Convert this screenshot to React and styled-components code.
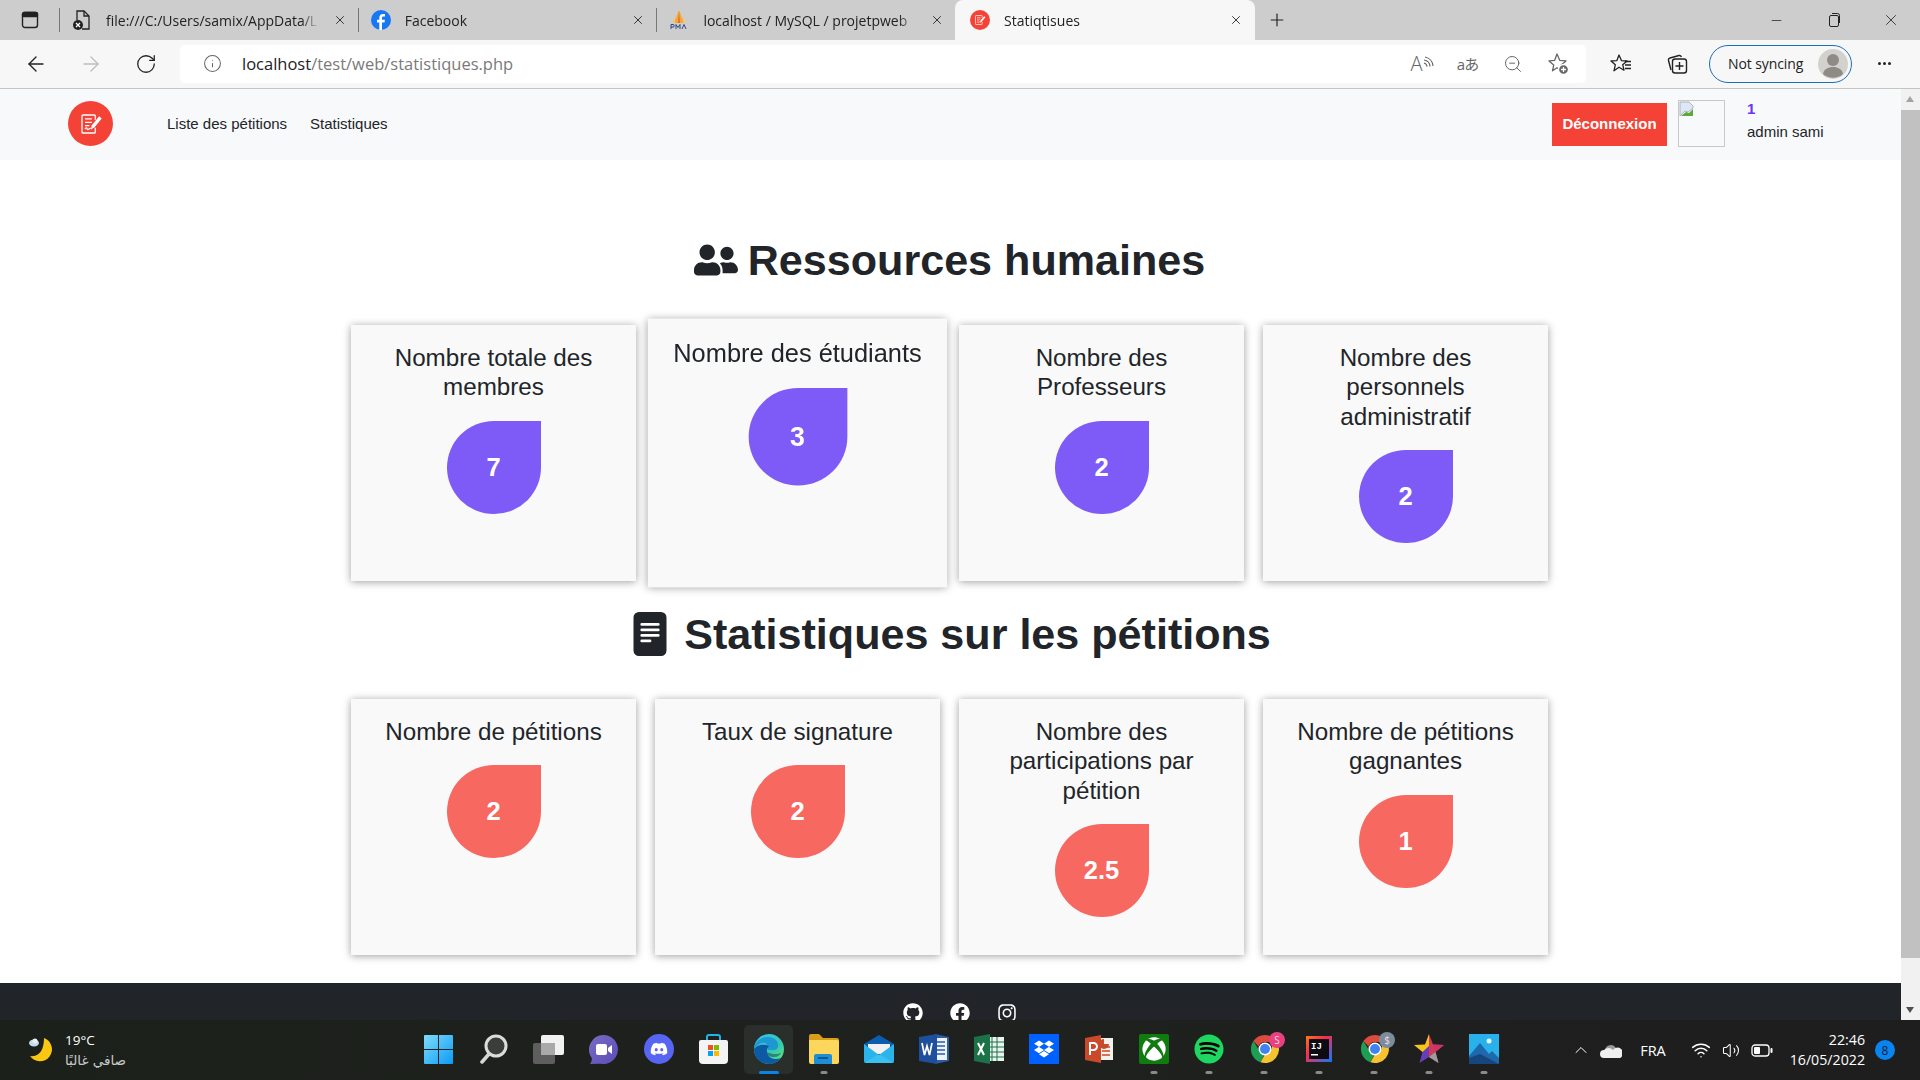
import React from 'react';
import styled, { createGlobalStyle } from 'styled-components';
import { FaUserFriends, FaGithub, FaFacebook, FaInstagram, FaDiscord, FaSpotify, FaXbox, FaDropbox } from 'react-icons/fa';
import { BsFileTextFill } from 'react-icons/bs';
import { ArrowLeft, ArrowRight, RotateCw, Info, ZoomOut, Minus, Plus, X, ChevronUp, Volume2, Wifi } from 'lucide-react';

const GlobalStyle = createGlobalStyle`
  html, body {
    margin: 0;
    padding: 0;
    height: 100%;
    overflow: hidden;
  }
  * { box-sizing: border-box; }
  #root { height: 100%; }
`;

const UI_FONT = `"Open Sans", "Noto Sans", sans-serif`;
const PAGE_FONT = `"Liberation Sans", Arial, sans-serif`;

const Screen = styled.div`
  height: 1080px;
  display: flex;
  flex-direction: column;
  background: #fff;
  font-family: ${PAGE_FONT};
`;

/* browser chrome */
const TabStrip = styled.div`
  height: 40px;
  flex: none;
  display: flex;
  align-items: stretch;
  background: #cdcdcd;
  font-family: ${UI_FONT};
  font-size: 14px;
  color: #222;
`;

const TabActions = styled.div`
  width: 60px;
  padding-left: 21px;
  display: flex;
  align-items: center;
  position: relative;
  &::after {
    content: '';
    position: absolute;
    right: 0;
    top: 8px;
    bottom: 8px;
    width: 1px;
    background: #777;
  }
`;

const Tab = styled.div`
  width: ${p => (p.$active ? '300px' : '298.7px')};
  margin-left: ${p => (p.$active ? '-1px' : '0')};
  padding: 0 12px 0 ${p => (p.$active ? '15px' : '12px')};
  display: flex;
  align-items: center;
  gap: 14px;
  position: relative;
  background: ${p => (p.$active ? '#f7f7f7' : 'transparent')};
  border-radius: ${p => (p.$active ? '8px 8px 0 0' : '0')};
  &::after {
    content: '';
    display: ${p => (p.$sep ? 'block' : 'none')};
    position: absolute;
    right: 0;
    top: 8px;
    bottom: 8px;
    width: 1px;
    background: #777;
  }
`;

const Favicon = styled.span`
  width: 20px;
  height: 20px;
  flex: none;
  display: flex;
  align-items: center;
  justify-content: center;
`;

const TabTitle = styled.span`
  flex: 1;
  white-space: nowrap;
  overflow: hidden;
  -webkit-mask-image: linear-gradient(to right, #000 92%, transparent 100%);
`;

const StripButton = styled.div`
  width: 44px;
  display: flex;
  align-items: center;
  justify-content: center;
`;

const WindowControls = styled.div`
  margin-left: auto;
  padding-right: 1px;
  display: flex;
`;

const WindowButton = styled.div`
  width: 57px;
  display: flex;
  align-items: center;
  justify-content: center;
`;

const Toolbar = styled.div`
  height: 49px;
  flex: none;
  padding: 5px 0 6px 8px;
  display: flex;
  align-items: center;
  background: #f7f7f7;
  border-bottom: 1px solid #c4c4c4;
  font-family: ${UI_FONT};
`;

const NavButton = styled.div`
  width: 55px;
  height: 38px;
  display: flex;
  align-items: center;
  justify-content: center;
  color: ${p => (p.$off ? '#bdbdbd' : '#222')};
`;

const AddressBar = styled.div`
  width: 1406px;
  height: 38px;
  margin: 0 7px;
  padding: 0 6px 0 23px;
  display: flex;
  align-items: center;
  background: #fff;
  border-radius: 5px;
  color: #666;
`;

const AddressText = styled.div`
  margin-left: 20px;
  flex: 1;
  font-size: 16.5px;
  color: #7a7a7a;
  b {
    font-weight: 400;
    color: #222;
  }
`;

const AddressAction = styled.div`
  width: 45px;
  height: 30px;
  display: flex;
  align-items: center;
  justify-content: center;
  position: relative;
  color: #666;
`;

const ReadAloud = styled.span`
  font-size: 20px;
  font-weight: 300;
  line-height: 1;
`;

const Translate = styled.span`
  font-family: "Open Sans", "Noto Sans CJK JP", sans-serif;
  font-size: 15px;
  letter-spacing: -1px;
`;

const ToolButton = styled.div`
  width: 56px;
  height: 38px;
  display: flex;
  align-items: center;
  justify-content: center;
  color: #222;
`;

const SyncPill = styled.div`
  width: 143px;
  height: 38px;
  margin-left: 4px;
  padding: 0 3px 0 18px;
  display: flex;
  align-items: center;
  justify-content: space-between;
  border: 1.5px solid #1b6fb5;
  border-radius: 19px;
  font-size: 14px;
  letter-spacing: -0.1px;
  color: #222;
`;

const MoreButton = styled.div`
  flex: 1;
  display: flex;
  align-items: center;
  justify-content: center;
  gap: 2px;
  padding-right: 3px;
`;

const MoreDot = styled.i`
  width: 3px;
  height: 3px;
  border-radius: 50%;
  background: #222;
`;

/* page */
const Viewport = styled.div`
  flex: 1;
  min-height: 0;
  display: flex;
  overflow: hidden;
`;

const Page = styled.div`
  flex: 1;
  min-width: 0;
  display: flex;
  flex-direction: column;
`;

const Navbar = styled.nav`
  height: 71px;
  flex: none;
  padding: 0 0 2px 68px;
  display: flex;
  align-items: center;
  background: #f8f9fa;
  font-size: 15px;
  color: #212529;
`;

const Logo = styled.div`
  width: 45px;
  height: 45px;
  border-radius: 50%;
  background: #f44336;
  display: flex;
  align-items: center;
  justify-content: center;
  margin-right: 54px;
`;

const NavLink = styled.a`
  margin-right: 23px;
  color: #212529;
`;

const Logout = styled.button`
  margin: 2px 0 0 auto;
  width: 115px;
  height: 43px;
  padding: 0 0 2px;
  border: none;
  background: #f44336;
  color: #fff;
  font: bold 15px ${PAGE_FONT};
`;

const Avatar = styled.div`
  width: 47px;
  height: 47px;
  margin-left: 11px;
  border: 1px solid #c8c8c8;
  display: flex;
  align-items: flex-start;
`;

const UserBlock = styled.div`
  width: 176px;
  padding: 0 0 8px 22px;
  line-height: 23px;
`;

const UserId = styled.div`
  color: #6d33ff;
  font-weight: 700;
`;

const Main = styled.main`
  flex: 1;
  padding: 76px 2px 28px 0;
  display: flex;
  flex-direction: column;
  align-items: center;
  gap: 29px;
`;

const Section = styled.section`
  display: flex;
  flex-direction: column;
  align-items: center;
  gap: 41px;
`;

const Heading = styled.h1`
  margin: 0;
  height: 48px;
  display: flex;
  align-items: center;
  gap: ${p => p.$gap}px;
  font-size: 43.1px;
  line-height: 48px;
  font-weight: 700;
  color: #212529;
`;

const CardRow = styled.div`
  display: grid;
  grid-template-columns: repeat(4, 285px);
  gap: 19px;
`;

const Card = styled.div`
  height: 256px;
  padding: 18px 22px 0;
  background: #f9f9f9;
  box-shadow: 0 1px 8px rgba(0, 0, 0, 0.38);
  text-align: center;
  transform: ${p => (p.$hovered ? 'scale(1.05)' : 'none')};
`;

const CardTitle = styled.h4`
  margin: 0 0 19px;
  font-size: 24.2px;
  line-height: 29.4px;
  font-weight: 400;
  color: #212529;
`;

const Drop = styled.div`
  width: 94px;
  height: 93px;
  margin: 0 auto;
  display: flex;
  align-items: center;
  justify-content: center;
  border-radius: 50% 0 50% 50%;
  background: ${p => p.$color};
  color: #fff;
  font-size: 25.5px;
  font-weight: 700;
`;

const Footer = styled.footer`
  height: 60px;
  flex: none;
  padding: 20px 0 0 19px;
  display: flex;
  justify-content: center;
  gap: 27px;
  background: #212529;
  color: #fff;
  font-size: 20px;
`;

const Scrollbar = styled.div`
  width: 19px;
  flex: none;
  padding-top: 21px;
  position: relative;
  background: #f1f1f1;
`;

const ScrollThumb = styled.div`
  height: 848px;
  background: #c1c1c1;
`;

const ScrollArrow = styled.i`
  position: absolute;
  left: 5px;
  ${p => (p.$down ? 'bottom: 7px;' : 'top: 7px;')}
  border-left: 4.5px solid transparent;
  border-right: 4.5px solid transparent;
  ${p => (p.$down ? 'border-top: 6px solid #505050;' : 'border-bottom: 6px solid #a3a3a3;')}
`;

/* windows taskbar */
const Taskbar = styled.div`
  height: 60px;
  flex: none;
  display: flex;
  align-items: stretch;
  background: linear-gradient(to right, #1c201b 0%, #1e211d 55%, #1e1e1e 85%);
  color: #fff;
  font-family: ${UI_FONT};
`;

const Weather = styled.div`
  width: 411px;
  flex: none;
  padding-left: 28px;
  display: flex;
  align-items: center;
  gap: 11px;
`;

const WeatherText = styled.div`
  font-size: 13.5px;
  line-height: 20px;
  em {
    display: block;
    font-style: normal;
    font-family: "DejaVu Sans", sans-serif;
    font-size: 13.5px;
    color: #c9c9c9;
  }
`;

const Dock = styled.div`
  display: flex;
  align-items: stretch;
`;

const DockItem = styled.div`
  width: 55.05px;
  height: 54px;
  margin-top: 5px;
  display: flex;
  align-items: center;
  justify-content: center;
  padding-bottom: 6px;
  position: relative;
  &::before {
    content: '';
    display: ${p => (p.$current ? 'block' : 'none')};
    position: absolute;
    left: 3px;
    right: 3px;
    top: 0;
    bottom: 5px;
    border-radius: 5px;
    background: #2b2f2b;
  }
  svg { position: relative; }
  &::after {
    content: '';
    display: ${p => (p.$state ? 'block' : 'none')};
    position: absolute;
    bottom: 5px;
    left: 50%;
    transform: translateX(-50%);
    width: ${p => (p.$state === 'active' ? '20px' : '7px')};
    height: 3px;
    border-radius: 2px;
    background: ${p => (p.$state === 'active' ? '#0a84e8' : '#8a8a8a')};
  }
`;

const Tray = styled.div`
  margin-left: auto;
  padding-right: 25px;
  display: flex;
  align-items: center;
`;

const TraySlot = styled.div`
  width: ${p => p.$w}px;
  display: flex;
  align-items: center;
  justify-content: center;
  font-size: 14.5px;
`;

const Clock = styled.div`
  width: 80px;
  margin-left: 1px;
  text-align: right;
  font-size: 14.2px;
  line-height: 20px;
  white-space: nowrap;
`;

const NotifyBadge = styled.div`
  width: 20px;
  height: 20px;
  margin-left: 10px;
  border-radius: 50%;
  background: #0a84f0;
  color: #10222f;
  font-size: 12px;
  display: flex;
  align-items: center;
  justify-content: center;
`;

/* small drawings */
const TabActionsIcon = () => (
  <svg width="18" height="18" viewBox="0 0 18 18" fill="none" stroke="#222" strokeWidth="1.4">
    <rect x="1.5" y="1.5" width="15" height="15" rx="2.5" />
    <rect x="1.5" y="1.5" width="15" height="4" rx="1.5" fill="#222" />
  </svg>
);

const FileErrorIcon = () => (
  <svg width="20" height="22" viewBox="0 0 20 22" fill="none" stroke="#222" strokeWidth="1.3">
    <path d="M5 11V2h7l5 5v13h-7" />
    <path d="M12 2v5h5" />
    <circle cx="6" cy="16" r="5" fill="#222" stroke="none" />
    <path d="M4 14l4 4M8 14l-4 4" stroke="#fff" />
  </svg>
);

const FacebookIcon = () => (
  <svg width="20" height="20" viewBox="0 0 20 20">
    <circle cx="10" cy="10" r="10" fill="#1877f2" />
    <path d="M11 20v-7.4h2.5l.4-2.9H11V8c0-.8.3-1.4 1.5-1.4H14V4.100c-.4-.1-1.200-.2-2-.2-2.200 0-3.700 1.300-3.700 3.800v2H6v2.900h2.300V20z" fill="#fff" />
  </svg>
);

const PmaIcon = () => (
  <svg width="20" height="20" viewBox="0 0 20 20">
    <path d="M10 0l3 8 3 5H4l3-5z" fill="#f2a83b" />
    <path d="M10 1l-1 12h2z" fill="#e46d1e" />
    <path d="M6 7l-3 6h3zM14 7l3 6h-3z" fill="#f6c76c" />
    <rect x="1" y="14" width="18" height="5" fill="#cdcdcd" />
    <path d="M2 19v-4.500h2a1 1 0 0 1 0 2.500H2M7 19v-4.500l2 3 2-3V19M13 19l2-4.500 2 4.500" fill="none" stroke="#2b4a8b" strokeWidth="1" />
  </svg>
);

const LogoGlyph = ({ size = 24 }) => (
  <svg width={size} height={size} viewBox="0 0 28 28" fill="none" stroke="#fff" strokeWidth="1.5">
    <path d="M19 9V4.500a1 1 0 0 0-1-1H4.500a1 1 0 0 0-1 1v19a1 1 0 0 0 1 1H18a1 1 0 0 0 1-1v-5" />
    <path d="M7 8h8M7 12h8M7 16h5M7 20c1-2 2-2 2.500-.5s1.500 1 2.500 0 2-.5 3 .5" strokeWidth="1.4" />
    <path d="M14 20l1-4.500L23.500 5l3 2.500L18 18z" fill="#fff" stroke="none" />
  </svg>
);

const Waves = () => (
  <svg width="12" height="16" viewBox="0 0 12 16" fill="none" stroke="#666" strokeWidth="1.2">
    <path d="M1 7a4 4 0 0 1 3 3.500M1 4a7 7 0 0 1 6 6.500M2 1a10 10 0 0 1 8 9" />
  </svg>
);

const FavAddIcon = () => (
  <svg width="24" height="24" viewBox="0 0 24 24" fill="none" stroke="#666" strokeWidth="1.3">
    <path d="M11 2l2.700 6.300 6.300.6-4.800 4.200 1.400 6-5.600-3.300-4.500 3 1.200-5.700L3 8.900l5.700-.6z" strokeLinejoin="round" />
    <circle cx="17.500" cy="17.500" r="5" fill="#666" stroke="#fff" />
    <path d="M17.500 15v5M15 17.500h5" stroke="#fff" />
  </svg>
);

const FavListIcon = () => (
  <svg width="22" height="22" viewBox="0 0 22 22" fill="none" stroke="#222" strokeWidth="1.3">
    <path d="M9 2l2.400 5.600 5.600.4-4.300 3.700 1.300 5.500-5-3-5 3.600 1.300-6L1 8l5.900-.4z" strokeLinejoin="round" />
    <path d="M15 8.500h6M15 12h6M15 15.500h6" />
  </svg>
);

const CollectionsIcon = () => (
  <svg width="22" height="22" viewBox="0 0 22 22" fill="none" stroke="#222" strokeWidth="1.4">
    <path d="M5 17L2.500 7.500a2 2 0 0 1 1.500-2.500L13 2.500c1.500-.4 2 .5 2.500 1.500" />
    <rect x="6.500" y="6" width="14" height="14" rx="2.500" />
    <path d="M13.500 9v8M9.500 13h8" />
  </svg>
);

const ProfileAvatar = () => (
  <svg width="30" height="30" viewBox="0 0 30 30">
    <circle cx="15" cy="15" r="15" fill="#d3d1cd" />
    <circle cx="15" cy="11" r="6" fill="#8e8a85" />
    <path d="M5 25c1-5 5-7 10-7s9 2 10 7a15 15 0 0 1-20 0z" fill="#8e8a85" />
  </svg>
);

const RestoreIcon = () => (
  <svg width="14" height="14" viewBox="0 0 14 14" fill="none" stroke="#222" strokeWidth="1">
    <rect x="2.500" y="2.500" width="9" height="11" rx="1.500" />
    <path d="M5 .5h5.500a2 2 0 0 1 2 2V10" />
  </svg>
);

const BrokenImage = () => (
  <svg width="16" height="16" viewBox="0 0 16 16">
    <path d="M1 1h9l4 4v2L9 11l-3-1-5 5z" fill="#dfe6f5" stroke="#9aa4b8" strokeWidth=".8" />
    <path d="M2 15l5-4 3 1 4-4v7z" fill="#5ea83c" />
  </svg>
);

const MoonIcon = () => (
  <svg width="26" height="28" viewBox="0 0 26 28">
    <path d="M16 2a12 12 0 1 1-14 18c6 1 14-2 14-18z" fill="#fbc711" />
    <ellipse cx="6" cy="7" rx="5" ry="3.500" fill="#c9dbe8" />
    <circle cx="7" cy="5" r="2.500" fill="#e7f0f6" />
  </svg>
);

const WinIcon = () => (
  <svg width="29" height="29" viewBox="0 0 29 29">
    <defs>
      <linearGradient id="wg" x1="0" y1="0" x2="1" y2="1">
        <stop offset="0" stopColor="#7fdcfb" />
        <stop offset="1" stopColor="#0a9bf5" />
      </linearGradient>
    </defs>
    <path d="M1 0h13v14H0V1a1 1 0 0 1 1-1zM15 0h13a1 1 0 0 1 1 1v13H15zM0 15h14v14H1a1 1 0 0 1-1-1zM15 15h14v13a1 1 0 0 1-1 1H15z" fill="url(#wg)" />
  </svg>
);

const SearchIcon = () => (
  <svg width="28" height="30" viewBox="0 0 28 30" fill="none">
    <circle cx="16" cy="12" r="10" fill="#3a3e3a" stroke="#dcdcdc" strokeWidth="3" />
    <path d="M9 20l-7 8" stroke="#d6d6d6" strokeWidth="3.500" strokeLinecap="round" />
  </svg>
);

const TaskViewIcon = () => (
  <svg width="31" height="29" viewBox="0 0 31 29">
    <rect x="0" y="8" width="22" height="21" rx="2" fill="#5e5e5e" />
    <rect x="8" y="0" width="23" height="20" rx="2" fill="#f1f1f1" />
    <rect x="8" y="8" width="14" height="12" fill="#a9a9a9" />
  </svg>
);

const TeamsIcon = () => (
  <svg width="29" height="29" viewBox="0 0 29 29">
    <defs>
      <linearGradient id="tg" x1="0" y1="0" x2="1" y2="1">
        <stop offset="0" stopColor="#7a6bc4" />
        <stop offset="1" stopColor="#5a4db8" />
      </linearGradient>
    </defs>
    <path d="M14.500 0a14.500 14.500 0 1 1-3 28.700L1 29c1.500-1.500 2-4 1.800-6A14.500 14.500 0 0 1 14.500 0z" fill="url(#tg)" />
    <rect x="7" y="9" width="11" height="11" rx="2" fill="#fff" />
    <path d="M19 13l4-3v9l-4-3z" fill="#fff" />
  </svg>
);

const DiscordIcon = () => (
  <svg width="30" height="30" viewBox="0 0 30 30">
    <circle cx="15" cy="15" r="15" fill="#5865f2" />
    <g transform="translate(6 6)"><FaDiscord size={18} color="#fff" /></g>
  </svg>
);

const StoreIcon = () => (
  <svg width="29" height="30" viewBox="0 0 29 30">
    <path d="M8 8V3a2 2 0 0 1 2-2h9a2 2 0 0 1 2 2v5" fill="none" stroke="#22b4e8" strokeWidth="2" />
    <path d="M2 6h25a2 2 0 0 1 2 2v18a4 4 0 0 1-4 4H4a4 4 0 0 1-4-4V8a2 2 0 0 1 2-2z" fill="#f4f4f4" />
    <rect x="9" y="11" width="5" height="5" fill="#f25022" />
    <rect x="15" y="11" width="5" height="5" fill="#7fba00" />
    <rect x="9" y="17" width="5" height="5" fill="#00a4ef" />
    <rect x="15" y="17" width="5" height="5" fill="#ffb900" />
  </svg>
);

const EdgeIcon = () => (
  <svg width="30" height="30" viewBox="0 0 30 30">
    <defs>
      <linearGradient id="eg1" x1="0" y1="0" x2="1" y2="1">
        <stop offset="0" stopColor="#35c1f1" />
        <stop offset=".6" stopColor="#36c8b0" />
        <stop offset="1" stopColor="#66eb6e" />
      </linearGradient>
    </defs>
    <circle cx="15" cy="15" r="15" fill="url(#eg1)" />
    <path d="M0 15C1 7 7 3 14 3s11 5 10 10c-.5 2-2 3-5 3h-5c.500-6-3-8-6-7-4 1-7 4-8 6z" fill="#1a8fd6" opacity=".85" />
    <path d="M0 15c0 9 7 15 15 15 5 0 9-2 12-6-5 2-11 1-13-3-2-3-1-7 1-9-6-3-13 0-15 3z" fill="#0c59a4" />
    <path d="M13 18c0 3 3 5 7 5s6-2 7-4c-3 1-9 2-14-1z" fill="#1a2b45" opacity=".45" />
  </svg>
);

const ExplorerIcon = () => (
  <svg width="30" height="30" viewBox="0 0 30 30">
    <path d="M0 2a2 2 0 0 1 2-2h8l4 4h14a2 2 0 0 1 2 2v4H0z" fill="#d89f1a" />
    <path d="M0 6h28a2 2 0 0 1 2 2v20a2 2 0 0 1-2 2H2a2 2 0 0 1-2-2z" fill="#fdd65c" />
    <path d="M5 30v-8a2 2 0 0 1 2-2h14a2 2 0 0 1 2 2v8z" fill="#1e8fd5" />
    <rect x="9" y="23" width="10" height="2" fill="#0b5a96" />
  </svg>
);

const MailIcon = () => (
  <svg width="30" height="28" viewBox="0 0 30 28">
    <path d="M0 9l15-9 15 9v2H0z" fill="#0c5db0" />
    <path d="M4 9h22v10H4z" fill="#f1f1f1" />
    <path d="M0 9l15 11L30 9v17a2 2 0 0 1-2 2H2a2 2 0 0 1-2-2z" fill="#2bb4ec" />
    <path d="M0 28l15-9 15 9z" fill="#45c9f5" opacity=".6" />
  </svg>
);

const WordIcon = () => (
  <svg width="30" height="30" viewBox="0 0 30 30">
    <path d="M16 0l14 3v24l-14 3z" fill="#2b5ea7" />
    <rect x="10" y="4" width="18" height="22" fill="#eef2f8" />
    <path d="M18 8h8M18 12h8M18 16h8M18 20h8" stroke="#2b5ea7" strokeWidth="1.4" />
    <path d="M0 3l18-3v30L0 27z" fill="#1e4f9c" />
    <path d="M3 9l2.500 12 2.500-9 2.500 9L13 9" fill="none" stroke="#fff" strokeWidth="1.700" />
  </svg>
);

const ExcelIcon = () => (
  <svg width="30" height="30" viewBox="0 0 30 30">
    <rect x="12" y="3" width="18" height="24" fill="#eaf4ee" />
    <path d="M18 3v24M23 3v24M14 8h16M14 13h16M14 18h16M14 23h16" stroke="#1c7247" strokeWidth="1" />
    <path d="M0 3l16-3v30L0 27z" fill="#1c7247" />
    <path d="M4 9l6 12M10 9l-6 12" stroke="#fff" strokeWidth="2" />
  </svg>
);

const DropboxIcon = () => (
  <svg width="30" height="30" viewBox="0 0 30 30">
    <rect width="30" height="30" fill="#0061fe" />
    <g transform="translate(5 5)"><FaDropbox size={20} color="#fff" /></g>
  </svg>
);

const PowerPointIcon = () => (
  <svg width="28" height="28" viewBox="0 0 28 28">
    <rect x="10" y="3" width="18" height="22" fill="#f4f0ee" />
    <path d="M17 12h8M17 16h8M17 20h8" stroke="#c9492a" strokeWidth="1.500" />
    <path d="M19 4a5 5 0 1 0 5 5h-5z" fill="#c9492a" />
    <path d="M0 3l16-3v28L0 25z" fill="#c9492a" />
    <path d="M5 20V8h3.500a3.500 3.500 0 0 1 0 7H5" fill="none" stroke="#fff" strokeWidth="2" />
  </svg>
);

const XboxIcon = () => (
  <svg width="30" height="30" viewBox="0 0 30 30">
    <rect width="30" height="30" rx="2" fill="#107c10" />
    <g transform="translate(3 3)"><FaXbox size={24} color="#fff" /></g>
  </svg>
);

const SpotifyDisc = styled.span`
  display: flex;
  border-radius: 50%;
  background: radial-gradient(circle, #000 55%, transparent 56%);
`;

const SpotifyIcon = () => <SpotifyDisc><FaSpotify size={30} color="#1ed760" /></SpotifyDisc>;

const ChromeIcon = ({ badge, badgeColor }) => (
  <svg width="45" height="34" viewBox="-9 0 45 34">
    <g transform="translate(0 3)">
      <path d="M14 0a14 14 0 0 1 12.100 7H14a7 7 0 0 0-6.500 4.500L2.400 6A14 14 0 0 1 14 0z" fill="#dd4b3e" />
      <path d="M2.400 6l5.500 9a7 7 0 0 0 6 3.300L9.500 27.300A14 14 0 0 1 2.400 6z" fill="#1e9e55" />
      <path d="M26.100 7A14 14 0 0 1 9.500 27.300l5-9a7 7 0 0 0 5-11.300z" fill="#f7c230" />
      <circle cx="14" cy="14" r="6.500" fill="#fff" />
      <circle cx="14" cy="14" r="5" fill="#3f82f0" />
    </g>
    <circle cx="26" cy="8" r="8" fill={badgeColor} />
    <text x="26" y="12" textAnchor="middle" fontSize="10" fill="#f0d9e0" fontFamily="Open Sans">{badge}</text>
  </svg>
);

const IntellijIcon = () => (
  <svg width="26" height="26" viewBox="0 0 26 26">
    <defs>
      <linearGradient id="ij" x1="0" y1="0" x2="1" y2="1">
        <stop offset="0" stopColor="#f97a12" />
        <stop offset=".4" stopColor="#fe2857" />
        <stop offset="1" stopColor="#087cfa" />
      </linearGradient>
    </defs>
    <rect width="26" height="26" fill="url(#ij)" />
    <rect x="3" y="3" width="20" height="20" fill="#0c0c12" />
    <text x="5" y="13" fontSize="9" fontWeight="700" fill="#fff" fontFamily="Liberation Mono">IJ</text>
    <rect x="5" y="18" width="7" height="1.500" fill="#fff" />
  </svg>
);

const StarIcon = () => (
  <svg width="30" height="30" viewBox="0 0 30 30">
    <path d="M15 0l4 10.500 11 .5-8.500 7 3 11L15 23z" fill="#d23a5a" />
    <path d="M19 10.500l11 .5-8.500 7z" fill="#cc3366" />
    <path d="M15 23l9.500 6-3-11z" fill="#9c9c9c" />
    <path d="M15 0l-4 10.500-11 .5 8.500 7L15 23z" fill="#f9c51b" />
    <path d="M15 12l-6.500 6-3 11L15 23z" fill="#6a3db8" />
  </svg>
);

const PhotosIcon = () => (
  <svg width="30" height="30" viewBox="0 0 30 30">
    <rect width="30" height="30" fill="#28b1ea" />
    <circle cx="20" cy="7" r="2.500" fill="#e9f7fd" />
    <path d="M0 22L11 9l9 11 3-3 7 7v6H0z" fill="#1e69ac" />
    <path d="M0 30v-6l11-4 19 10z" fill="#16467e" />
  </svg>
);

const OneDriveIcon = () => (
  <svg width="22" height="15" viewBox="0 0 22 15">
    <path d="M5 7a6 6 0 0 1 11-2 5 5 0 0 1 0 1l-8 3z" fill="#9a9a9a" />
    <path d="M4 15a4 4 0 0 1 0-8 6 6 0 0 1 9 0 4 4 0 0 1 9 6c-.5 1.500-1.500 2-3 2z" fill="#efefef" />
  </svg>
);

const BatteryIcon = () => (
  <svg width="22" height="13" viewBox="0 0 22 13" fill="none">
    <rect x="1" y="1" width="17" height="11" rx="3" stroke="#fff" strokeWidth="1.3" />
    <rect x="3" y="3" width="6" height="7" rx="1" fill="#fff" />
    <rect x="19.500" y="4" width="2" height="5" rx="1" fill="#fff" />
  </svg>
);

const tabs = [
  { id: 'file', title: 'file:///C:/Users/samix/AppData/L', icon: <FileErrorIcon />, sep: true },
  { id: 'fb', title: 'Facebook', icon: <FacebookIcon />, sep: true },
  { id: 'pma', title: 'localhost / MySQL / projetpweb', icon: <PmaIcon /> },
  {
    id: 'stats',
    title: 'Statiqtisues',
    active: true,
    icon: (
      <svg width="20" height="20" viewBox="0 0 20 20">
        <circle cx="10" cy="10" r="10" fill="#f44336" />
        <g transform="translate(4 4)"><LogoGlyph size={12} /></g>
      </svg>
    ),
  },
];

const humanCards = [
  { title: 'Nombre totale des membres', value: '7' },
  { title: 'Nombre des étudiants', value: '3', hovered: true },
  { title: 'Nombre des Professeurs', value: '2' },
  { title: 'Nombre des personnels administratif', value: '2' },
];

const petitionCards = [
  { title: 'Nombre de pétitions', value: '2' },
  { title: 'Taux de signature', value: '2' },
  { title: 'Nombre des participations par pétition', value: '2.5' },
  { title: 'Nombre de pétitions gagnantes', value: '1' },
];

const dockApps = [
  { id: 'start', icon: <WinIcon /> },
  { id: 'search', icon: <SearchIcon /> },
  { id: 'taskview', icon: <TaskViewIcon /> },
  { id: 'teams', icon: <TeamsIcon /> },
  { id: 'discord', icon: <DiscordIcon /> },
  { id: 'store', icon: <StoreIcon /> },
  { id: 'edge', icon: <EdgeIcon />, current: true, state: 'active' },
  { id: 'explorer', icon: <ExplorerIcon />, state: 'open' },
  { id: 'mail', icon: <MailIcon /> },
  { id: 'word', icon: <WordIcon /> },
  { id: 'excel', icon: <ExcelIcon /> },
  { id: 'dropbox', icon: <DropboxIcon /> },
  { id: 'ppt', icon: <PowerPointIcon /> },
  { id: 'xbox', icon: <XboxIcon />, state: 'open' },
  { id: 'spotify', icon: <SpotifyIcon />, state: 'open' },
  { id: 'chrome1', icon: <ChromeIcon badge="S" badgeColor="#e8417f" />, state: 'open' },
  { id: 'idea', icon: <IntellijIcon />, state: 'open' },
  { id: 'chrome2', icon: <ChromeIcon badge="$" badgeColor="#7b8d9c" />, state: 'open' },
  { id: 'star', icon: <StarIcon />, state: 'open' },
  { id: 'photos', icon: <PhotosIcon />, state: 'open' },
];

const StatCards = ({ cards, color }) => (
  <CardRow>
    {cards.map(card => (
      <Card key={card.title} $hovered={card.hovered}>
        <CardTitle>{card.title}</CardTitle>
        <Drop $color={color}>{card.value}</Drop>
      </Card>
    ))}
  </CardRow>
);

function App() {
  return (
    <Screen>
      <GlobalStyle />

      <TabStrip>
        <TabActions><TabActionsIcon /></TabActions>
        {tabs.map(tab => (
          <Tab key={tab.id} $active={tab.active} $sep={tab.sep}>
            <Favicon>{tab.icon}</Favicon>
            <TabTitle>{tab.title}</TabTitle>
            <X size={14} strokeWidth={1.5} />
          </Tab>
        ))}
        <StripButton><Plus size={20} strokeWidth={1.4} /></StripButton>
        <WindowControls>
          <WindowButton><Minus size={15} strokeWidth={1.2} /></WindowButton>
          <WindowButton><RestoreIcon /></WindowButton>
          <WindowButton><X size={18} strokeWidth={1.1} /></WindowButton>
        </WindowControls>
      </TabStrip>

      <Toolbar>
        <NavButton><ArrowLeft size={24} strokeWidth={1.4} /></NavButton>
        <NavButton $off><ArrowRight size={24} strokeWidth={1.4} /></NavButton>
        <NavButton><RotateCw size={22} strokeWidth={1.4} /></NavButton>
        <AddressBar>
          <Info size={19} strokeWidth={1.3} />
          <AddressText><b>localhost</b>/test/web/statistiques.php</AddressText>
          <AddressAction><ReadAloud>A</ReadAloud><Waves /></AddressAction>
          <AddressAction><Translate>aあ</Translate></AddressAction>
          <AddressAction><ZoomOut size={20} strokeWidth={1.2} /></AddressAction>
          <AddressAction><FavAddIcon /></AddressAction>
        </AddressBar>
        <ToolButton><FavListIcon /></ToolButton>
        <ToolButton><CollectionsIcon /></ToolButton>
        <SyncPill>Not syncing<ProfileAvatar /></SyncPill>
        <MoreButton><MoreDot /><MoreDot /><MoreDot /></MoreButton>
      </Toolbar>

      <Viewport>
        <Page>
          <Navbar>
            <Logo><LogoGlyph /></Logo>
            <NavLink>Liste des pétitions</NavLink>
            <NavLink>Statistiques</NavLink>
            <Logout>Déconnexion</Logout>
            <Avatar><BrokenImage /></Avatar>
            <UserBlock>
              <UserId>1</UserId>
              <div>admin sami</div>
            </UserBlock>
          </Navbar>

          <Main>
            <Section>
              <Heading $gap={10}><FaUserFriends size={44} />Ressources humaines</Heading>
              <StatCards cards={humanCards} color="#7e5bf6" />
            </Section>
            <Section>
              <Heading $gap={12}><BsFileTextFill size={44} />Statistiques sur les pétitions</Heading>
              <StatCards cards={petitionCards} color="#f76860" />
            </Section>
          </Main>

          <Footer>
            <FaGithub />
            <FaFacebook />
            <FaInstagram />
          </Footer>
        </Page>
        <Scrollbar>
          <ScrollArrow />
          <ScrollThumb />
          <ScrollArrow $down />
        </Scrollbar>
      </Viewport>

      <Taskbar>
        <Weather>
          <MoonIcon />
          <WeatherText>
            19°C
            <em>صافي غالبًا</em>
          </WeatherText>
        </Weather>
        <Dock>
          {dockApps.map(app => (
            <DockItem key={app.id} $current={app.current} $state={app.state}>{app.icon}</DockItem>
          ))}
        </Dock>
        <Tray>
          <TraySlot $w={30}><ChevronUp size={20} strokeWidth={1.2} /></TraySlot>
          <TraySlot $w={30}><OneDriveIcon /></TraySlot>
          <TraySlot $w={54}>FRA</TraySlot>
          <TraySlot $w={42}><Wifi size={20} strokeWidth={1.8} /></TraySlot>
          <TraySlot $w={18}><Volume2 size={21} strokeWidth={1.4} /></TraySlot>
          <TraySlot $w={44}><BatteryIcon /></TraySlot>
          <Clock>22:46<br />16/05/2022</Clock>
          <NotifyBadge>8</NotifyBadge>
        </Tray>
      </Taskbar>
    </Screen>
  );
}

export default App;
